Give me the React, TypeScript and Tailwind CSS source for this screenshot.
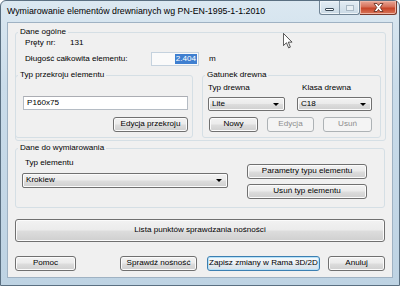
import React from "react";
import clsx from "clsx";

const btnNormal =
  "border-[#707070] bg-[linear-gradient(to_bottom,#f2f2f2_0%,#ebebeb_48%,#dddddd_52%,#cfcfcf_100%)] shadow-[inset_0_0_0_1px_#fbfbfb] text-black";
const btnDisabled = "border-[#adb2b5] bg-[#f4f4f4] text-[#8d8d8d]";
const btnFocused =
  "border-[#3c7fb1] bg-[linear-gradient(to_bottom,#f6f9fb_0%,#eef3f7_48%,#e2eaf0_52%,#d7e2ea_100%)] shadow-[inset_0_0_0_1px_#b6e1f8] text-black";

function Btn({
  children,
  className,
  disabled,
  focused,
}: {
  children: React.ReactNode;
  className?: string;
  disabled?: boolean;
  focused?: boolean;
}) {
  return (
    <div
      className={clsx(
        "flex items-center justify-center rounded-[3px] border leading-none",
        disabled ? btnDisabled : focused ? btnFocused : btnNormal,
        className
      )}
    >
      {children}
    </div>
  );
}

function Combo({ value, className }: { value: string; className?: string }) {
  return (
    <div
      className={clsx(
        "flex items-center justify-between rounded-[2px] border pl-[3px] pr-[5px] leading-none",
        btnNormal,
        className
      )}
    >
      <span>{value}</span>
      <span className="h-0 w-0 border-x-[3px] border-t-[3px] border-x-transparent border-t-black" />
    </div>
  );
}

function Group({
  title,
  className,
  children,
}: {
  title: string;
  className?: string;
  children?: React.ReactNode;
}) {
  return (
    <fieldset className={clsx("min-w-0 rounded-[3px] border border-[#d5dfe5]", className)}>
      <legend className="ml-[2px] px-[2px] leading-[10px]">{title}</legend>
      {children}
    </fieldset>
  );
}

function Cursor() {
  return (
    <svg width="10" height="16" viewBox="0 0 13 21" className="absolute left-[283px] top-[33px]">
      <path
        d="M0.5 0.5 L0.5 16.5 L4.5 12.8 L7.3 19.5 L9.6 18.5 L6.9 12 L11.8 12 Z"
        fill="#fff"
        stroke="#222"
        strokeWidth="1"
        strokeLinejoin="round"
      />
    </svg>
  );
}

function CaptionButtons() {
  return (
    <div className="flex items-start pr-[2px]">
      <div className="flex h-[14px] overflow-hidden rounded-b-[3px] border border-t-0 border-[#6f8394] bg-[linear-gradient(to_bottom,#e4edf4,#c9d9e5)] shadow-[inset_0_0_0_1px_#eef4f8]">
        <div className="flex w-[20px] items-end justify-center border-r border-[#8a9cab] pb-[3px]">
          <div className="h-[3px] w-[9px] rounded-[1px] border border-[#3b4a57] bg-white" />
        </div>
        <div className="flex w-[19px] items-center justify-center">
          <div className="h-[6px] w-[8px] border border-[#a9b8c4] bg-[#e8eff4]" />
        </div>
      </div>
      <div className="flex h-[14px] w-[37px] items-center justify-center rounded-br-[3px] border border-l-0 border-t-0 border-[#7a3a2c] bg-[linear-gradient(to_bottom,#e9a797_0%,#d66f58_45%,#c74428_55%,#d8785c_100%)] shadow-[inset_0_0_0_1px_#eeb4a4]">
        <svg width="11" height="9" viewBox="0 0 11 9">
          <path
            d="M1 0.5 L4 0.5 L5.5 2.6 L7 0.5 L10 0.5 L7.2 4.5 L10 8.5 L7 8.5 L5.5 6.4 L4 8.5 L1 8.5 L3.8 4.5 Z"
            fill="#fff"
            stroke="#5a2418"
            strokeWidth="0.8"
          />
        </svg>
      </div>
    </div>
  );
}

export default function App() {
  return (
    <div className="relative h-[286px] w-[400px] overflow-hidden bg-white font-['Liberation_Sans',Arial,sans-serif] text-[8.1px] text-black">
      <div className="flex h-[286px] w-[400px] flex-col rounded-t-[6px] border border-[#5a6f81] bg-[linear-gradient(to_bottom,#dbe8f1_0%,#cadcea_30%,#bed3e3_100%)]">
        {/* title bar */}
        <div className="flex h-[21px] items-start justify-between">
          <div className="pl-[6px] pt-[4px] text-[8.8px] leading-[12px]">
            Wymiarowanie elementów drewnianych wg PN-EN-1995-1-1:2010
          </div>
          <CaptionButtons />
        </div>

        {/* client area */}
        <div className="mx-[6px] mb-[7px] flex flex-1 flex-col border border-[#9fb2c3] bg-[#f0f0f0] pl-[7px] pt-[4px]">
          <Group title="Dane ogólne" className="h-[114px] w-[371px]">
            <div className="mt-[1px] flex h-[10px] items-center pl-[9px]">
              <span className="w-[45px]">Pręty nr:</span>
              <span>131</span>
            </div>
            <div className="mt-[4px] flex h-[14px] items-center pl-[9px]">
              <span className="w-[126px]">Długość całkowita elementu:</span>
              <div className="flex h-[14px] w-[48px] items-center justify-end border border-[#c5d2de] bg-[#fafafa] pr-[1px]">
                <span className="bg-[#3f7fd0] px-[1px] leading-[10px] text-white">2.404</span>
              </div>
              <span className="ml-[10px]">m</span>
            </div>
            <div className="-ml-[1px] mt-[4px] flex gap-[9px]">
              <Group title="Typ przekroju elementu" className="h-[68px] w-[178px]">
                <div className="ml-[7px] mt-[16px] flex h-[14px] w-[165px] items-center border border-[#b5bcc4] border-t-[#abadb3] bg-white pl-[3px]">
                  P160x75
                </div>
                <Btn className="ml-[97px] mt-[7px] h-[15px] w-[75px]">Edycja przekroju</Btn>
              </Group>
              <Group title="Gatunek drewna" className="h-[68px] w-[179px]">
                <div className="ml-[5px] mt-[3px] flex h-[10px] items-center">
                  <span className="w-[94px]">Typ drewna</span>
                  <span>Klasa drewna</span>
                </div>
                <div className="ml-[5px] mt-[4px] flex gap-[12px]">
                  <Combo value="Lite" className="h-[14px] w-[77px]" />
                  <Combo value="C18" className="h-[14px] w-[75px]" />
                </div>
                <div className="ml-[6px] mt-[6px] flex gap-[9px]">
                  <Btn className="h-[15px] w-[49px]">Nowy</Btn>
                  <Btn disabled className="h-[15px] w-[47px]">
                    Edycja
                  </Btn>
                  <Btn disabled className="h-[15px] w-[49px]">
                    Usuń
                  </Btn>
                </div>
              </Group>
            </div>
          </Group>

          <Group title="Dane do wymiarowania" className="mt-[2px] h-[65px] w-[370px]">
            <div className="flex">
              <div className="ml-[6px] w-[206px]">
                <div className="mt-[5px] h-[10px] pl-[3px] leading-[10px]">Typ elementu</div>
                <Combo value="Krokiew" className="mt-[5px] h-[15px] w-[206px]" />
              </div>
              <div className="ml-[19px] mt-[11px] flex flex-col gap-[5px]">
                <Btn className="h-[15px] w-[120px]">Parametry typu elementu</Btn>
                <Btn className="h-[15px] w-[120px]">Usuń typ elementu</Btn>
              </div>
            </div>
          </Group>

          <Btn className="mt-[11px] h-[23px] w-[370px]">Lista punktów sprawdzania nośności</Btn>

          <div className="mt-[14px] flex h-[15px]">
            <Btn className="h-[15px] w-[61px]">Pomoc</Btn>
            <Btn className="ml-[44px] h-[15px] w-[77px]">Sprawdź nośność</Btn>
            <Btn focused className="ml-[10px] h-[15px] w-[113px]">
              Zapisz zmiany w Rama 3D/2D
            </Btn>
            <Btn className="ml-[8px] h-[15px] w-[57px]">Anuluj</Btn>
          </div>
        </div>
      </div>
      <Cursor />
    </div>
  );
}
